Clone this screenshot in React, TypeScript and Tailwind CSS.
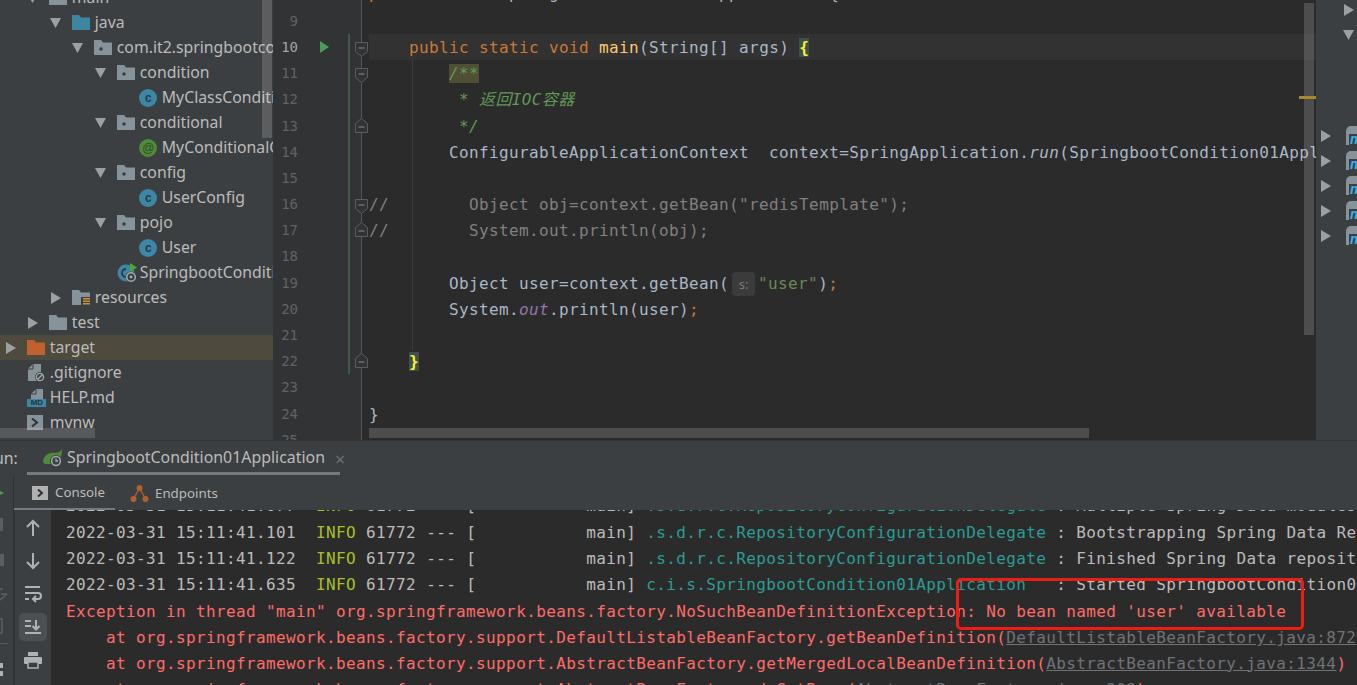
import React from 'react';

const MONO = "font-['DejaVu_Sans_Mono','Noto_Sans_CJK_SC',monospace]";

// tree indent levels, written out so tailwind picks them up
const INDENT: Record<number, string> = {
  0: 'pl-[5px]',
  1: 'pl-[27px]',
  2: 'pl-[50px]',
  3: 'pl-[72px]',
  4: 'pl-[95px]',
  5: 'pl-[117px]',
};

const Arrow = ({ open }: { open: boolean }) => (
  <svg width="12" height="12" viewBox="0 0 12 12" className="shrink-0">
    {open ? <path d="M0 1h11L5.5 11z" fill="#9da0a2" /> : <path d="M1 0l10 6-10 6z" fill="#9da0a2" />}
  </svg>
);

const Folder = ({ color, dot, stripes }: { color: string; dot?: boolean; stripes?: boolean }) => (
  <svg width="18" height="15" viewBox="0 0 18 15" className="shrink-0">
    <path d="M0 0h7l2 2.5h9V15H0z" fill={color} />
    {dot && <circle cx="7" cy="9" r="1.8" fill="#3c3f41" />}
    {stripes && (
      <g>
        <rect x="9" y="7" width="9" height="8" fill="#3c3f41" />
        <rect x="11" y="8" width="7" height="1.5" fill="#c9953b" />
        <rect x="11" y="10.5" width="7" height="1.5" fill="#c9953b" />
        <rect x="11" y="13" width="7" height="1.5" fill="#c9953b" />
      </g>
    )}
  </svg>
);

const ClassIcon = () => (
  <div className="w-[18px] h-[18px] rounded-full bg-[#3d87a6] flex items-center justify-center shrink-0 text-[12px] leading-none font-bold text-[#2b3a42] font-['Liberation_Sans',sans-serif]">
    c
  </div>
);

const AnnotationIcon = () => (
  <div className="w-[18px] h-[18px] rounded-full bg-[#4f8a3a] flex items-center justify-center shrink-0 text-[12px] leading-none text-[#2f4a2a] font-['Liberation_Sans',sans-serif]">
    @
  </div>
);

const BootIcon = () => (
  <div className="relative w-[20px] h-[20px] shrink-0">
    <svg width="20" height="20" viewBox="0 0 20 20">
      <circle cx="9" cy="10" r="8.5" fill="#3d87a6" />
      <path d="M9 6a4 4 0 1 0 0 8" fill="none" stroke="#2b3a42" strokeWidth="1.8" />
      <path d="M13 0l7 4.5-7 4.5z" fill="#4ea72e" />
      <circle cx="14" cy="14" r="5.5" fill="#3c3f41" />
      <circle cx="14" cy="14" r="4.3" fill="none" stroke="#a0aab0" strokeWidth="1.6" />
      <circle cx="14" cy="14" r="1.4" fill="#a0aab0" />
    </svg>
  </div>
);

const FileIcon = ({ kind }: { kind: string }) => {
  if (kind === 'git') {
    return (
      <svg width="18" height="18" viewBox="0 0 18 18" className="shrink-0">
        <path d="M1 5l5-5h8v17H1z" fill="#87939a" />
        <path d="M1 5h5V0" fill="none" stroke="#3c3f41" />
        <circle cx="13" cy="13" r="5" fill="#3c3f41" />
        <circle cx="13" cy="13" r="3.6" fill="none" stroke="#a0aab0" strokeWidth="1.4" />
        <path d="M10.5 15.5l5-5" stroke="#a0aab0" strokeWidth="1.4" />
      </svg>
    );
  }
  if (kind === 'md') {
    return (
      <div className="relative w-[19px] h-[18px] shrink-0">
        <svg width="19" height="10" viewBox="0 0 19 10">
          <path d="M4 5l5-5h7v10H4z" fill="#87939a" />
          <path d="M4 5h5V0" fill="none" stroke="#3c3f41" />
        </svg>
        <div className="absolute left-0 bottom-0 w-[19px] h-[8px] bg-[#3d87a6] text-[8px] leading-[8px] font-bold text-center text-[#22323a] font-['Liberation_Sans',sans-serif]">
          MD
        </div>
      </div>
    );
  }
  return (
    <div className="w-[16px] h-[15px] bg-[#87939a] flex items-center justify-center shrink-0">
      <svg width="8" height="9" viewBox="0 0 8 9">
        <path d="M1 0.5l5 4-5 4" fill="none" stroke="#2f3234" strokeWidth="2" />
      </svg>
    </div>
  );
};

type TreeRow = { level: number; arrow?: 'open' | 'closed'; icon: React.ReactNode; text: string; active?: boolean };

const treeRows: TreeRow[] = [
  { level: 1, arrow: 'open', icon: <Folder color="#87939a" />, text: 'main' },
  { level: 2, arrow: 'open', icon: <Folder color="#3e86a0" />, text: 'java' },
  { level: 3, arrow: 'open', icon: <Folder color="#87939a" dot />, text: 'com.it2.springbootcondition01' },
  { level: 4, arrow: 'open', icon: <Folder color="#87939a" dot />, text: 'condition' },
  { level: 5, icon: <ClassIcon />, text: 'MyClassCondition' },
  { level: 4, arrow: 'open', icon: <Folder color="#87939a" dot />, text: 'conditional' },
  { level: 5, icon: <AnnotationIcon />, text: 'MyConditionalOnClass' },
  { level: 4, arrow: 'open', icon: <Folder color="#87939a" dot />, text: 'config' },
  { level: 5, icon: <ClassIcon />, text: 'UserConfig' },
  { level: 4, arrow: 'open', icon: <Folder color="#87939a" dot />, text: 'pojo' },
  { level: 5, icon: <ClassIcon />, text: 'User' },
  { level: 4, icon: <BootIcon />, text: 'SpringbootCondition01Application' },
  { level: 2, arrow: 'closed', icon: <Folder color="#87939a" stripes />, text: 'resources' },
  { level: 1, arrow: 'closed', icon: <Folder color="#87939a" />, text: 'test' },
  { level: 0, arrow: 'closed', icon: <Folder color="#c0622d" />, text: 'target', active: true },
  { level: 0, icon: <FileIcon kind="git" />, text: '.gitignore' },
  { level: 0, icon: <FileIcon kind="md" />, text: 'HELP.md' },
  { level: 0, icon: <FileIcon kind="sh" />, text: 'mvnw' },
  { level: 0, icon: <FileIcon kind="sh" />, text: 'mvnw.cmd' },
];

const Sidebar = () => (
  <div className="relative w-[273px] shrink-0 bg-[#3c3f41] overflow-hidden text-[15.8px] text-[#bbbbbb] font-['Noto_Sans',sans-serif]">
    <div className="mt-[-15px]">
      {treeRows.map((row, i) => (
        <div
          key={i}
          className={`h-[25px] flex items-center whitespace-nowrap ${INDENT[row.level]} ${row.active ? 'bg-[#4f4a3e]' : ''}`}
        >
          <div className="w-[22.4px] shrink-0 flex items-center">
            {row.arrow && <Arrow open={row.arrow === 'open'} />}
          </div>
          <div className="w-[22.4px] shrink-0 flex items-center">{row.icon}</div>
          <span>{row.text}</span>
        </div>
      ))}
    </div>
    {/* scrollbars */}
    <div className="absolute left-[262px] top-0 w-[10px] h-[138px] bg-[rgba(255,255,255,0.16)]" />
    <div className="absolute left-0 top-[428px] w-[95px] h-[10px] bg-[rgba(255,255,255,0.14)]" />
  </div>
);

const C = {
  kw: 'text-[#cc7832]',
  fn: 'text-[#ffc66d]',
  doc: 'text-[#629755] italic',
  off: 'text-[#808080]',
  str: 'text-[#6a8759]',
  purple: 'text-[#9876aa] italic',
  match: 'text-[#ffef28] font-bold bg-[#3b514d]',
};

type Fold = 'down' | 'up' | undefined;
type CodeLine = { n: number; fold?: Fold; body: React.ReactNode; changed?: boolean; run?: boolean; current?: boolean };

const codeLines: CodeLine[] = [
  {
    n: 8,
    body: (
      <div className="mt-[-2px]">
        <span className={C.kw}>public class </span>SpringbootCondition01Application {'{'}
      </div>
    ),
  },
  { n: 9, body: '' },
  {
    n: 10,
    fold: 'down',
    changed: true,
    run: true,
    current: true,
    body: (
      <>
        {'    '}
        <span className={C.kw}>public static void </span>
        <span className={C.fn}>main</span>(String[] args) <span className={C.match}>{'{'}</span>
      </>
    ),
  },
  {
    n: 11,
    fold: 'down',
    changed: true,
    body: (
      <>
        {'        '}
        <span className={`${C.doc} bg-[#504f33]`}>/**</span>
      </>
    ),
  },
  { n: 12, changed: true, body: <span className={C.doc}>{'         * 返回IOC容器'}</span> },
  { n: 13, fold: 'up', changed: true, body: <span className={C.doc}>{'         */'}</span> },
  {
    n: 14,
    changed: true,
    body: (
      <>
        {'        ConfigurableApplicationContext  context=SpringApplication.'}
        <span className="italic">run</span>
        {'(SpringbootCondition01Application.class, args);'}
      </>
    ),
  },
  { n: 15, changed: true, body: '' },
  { n: 16, fold: 'down', changed: true, body: <span className={C.off}>{'//        Object obj=context.getBean("redisTemplate");'}</span> },
  { n: 17, fold: 'up', changed: true, body: <span className={C.off}>{'//        System.out.println(obj);'}</span> },
  { n: 18, changed: true, body: '' },
  {
    n: 19,
    changed: true,
    body: (
      <>
        {'        Object user=context.getBean('}
        <span className="inline-block w-[23px] h-[24px] mx-[3px] rounded-[4px] bg-[#3b3b3b] text-[#787878] text-[13px] leading-[24px] text-center align-middle tracking-normal font-['Noto_Sans',sans-serif]">
          s:
        </span>
        <span className={C.str}>"user"</span>)<span className={C.kw}>;</span>
      </>
    ),
  },
  {
    n: 20,
    changed: true,
    body: (
      <>
        {'        System.'}
        <span className={C.purple}>out</span>.println(user)<span className={C.kw}>;</span>
      </>
    ),
  },
  { n: 21, changed: true, body: '' },
  {
    n: 22,
    fold: 'up',
    changed: true,
    body: (
      <>
        {'    '}
        <span className={C.match}>{'}'}</span>
      </>
    ),
  },
  { n: 23, body: '' },
  { n: 24, body: '}' },
  { n: 25, body: '' },
];

const FoldMark = ({ dir }: { dir: 'down' | 'up' }) => (
  <svg
    width="13"
    height="15"
    viewBox="0 0 13 15"
    className={`absolute left-[82px] ${dir === 'down' ? 'top-[8px]' : 'top-[5px]'}`}
  >
    <path
      d={dir === 'down' ? 'M0.5 0.5h12v9l-6 5-6-5z' : 'M0.5 14.5h12v-9l-6-5-6 5z'}
      fill="#313335"
      stroke="#5a5d5f"
    />
    <path d={dir === 'down' ? 'M3.5 6h6' : 'M3.5 9h6'} stroke="#8a8d8f" />
  </svg>
);

const Editor = () => (
  <div className={`relative flex-1 min-w-0 bg-[#2b2b2b] overflow-hidden ${MONO} text-[16px] tracking-[0.37px] text-[#a9b7c6]`}>
    <div className="mt-[-18.4px]">
      {codeLines.map((line) => (
        <div key={line.n} className="flex h-[26.2px] leading-[26.2px] whitespace-pre">
          <div className="relative w-[89px] shrink-0 bg-[#313335] border-r border-[#555555]">
            <span
              className={`absolute right-[63px] text-[14px] tracking-normal ${line.current ? 'text-[#a4a3a3]' : 'text-[#606366]'}`}
            >
              {line.n}
            </span>
            {line.run && (
              <svg width="9" height="12" viewBox="0 0 9 12" className="absolute left-[47px] top-[7px]">
                <path d="M0 0l9 6-9 6z" fill="#499c54" />
              </svg>
            )}
            {line.changed && <div className="absolute left-[75px] top-0 bottom-0 w-[2px] bg-[#3f5a4a]" />}
            {line.fold && <FoldMark dir={line.fold} />}
          </div>
          <div className="w-[7px] shrink-0" />
          <div className={`flex-1 min-w-0 overflow-hidden pt-px ${line.current ? 'bg-[#323232]' : ''}`}>{line.body}</div>
        </div>
      ))}
    </div>
    {/* indent guide and scrollbars sit over the code */}
    <div className="absolute left-[139px] top-[60px] w-px h-[290px] bg-[#3c3c3c]" />
    <div className="absolute left-[1031px] top-[3px] w-[10px] h-[332px] bg-[rgba(255,255,255,0.16)]" />
    <div className="absolute left-[1026px] top-[96px] w-[17px] h-[3px] bg-[#a68a2b]" />
    <div className="absolute left-[96px] top-[428px] w-[720px] h-[10px] bg-[rgba(255,255,255,0.16)]" />
  </div>
);

const MavenIcon = () => (
  <div className="relative w-[16px] h-[19px] shrink-0 bg-[#87939a] rounded-tl-[5px]">
    <span className="absolute left-[3px] top-[8px] w-[13px] h-[11px] bg-[#3c3f41] pl-[1px] text-[14px] leading-[10px] font-bold italic text-[#35b3e6] font-['Liberation_Sans',sans-serif]">
      m
    </span>
  </div>
);

const RightPanel = () => (
  <div className="w-[41px] shrink-0 bg-[#3c3f41] overflow-hidden">
    <div className="pl-[27px] pt-[4px] flex flex-col gap-[13px]">
      <Arrow open={false} />
      <Arrow open />
    </div>
    <div className="mt-[82px] pl-[4px] flex flex-col">
      {[0, 1, 2, 3, 4].map((i) => (
        <div key={i} className="h-[25px] flex items-center gap-[14px]">
          <Arrow open={false} />
          <MavenIcon />
        </div>
      ))}
    </div>
  </div>
);

const SpringTabIcon = () => (
  <svg width="20" height="18" viewBox="0 0 20 18" className="shrink-0">
    <path d="M0 12C1 5 8 3 12 4c3 0 5-1 7-4 0 7-2 14-9 15H3C1 15 0 14 0 12z" fill="#4f8a3a" />
    <circle cx="13" cy="12" r="6" fill="#3c3f41" />
    <circle cx="13" cy="12" r="4.4" fill="none" stroke="#a0aab0" strokeWidth="1.5" />
    <path d="M13 9.5V12h2" fill="none" stroke="#a0aab0" strokeWidth="1.3" />
  </svg>
);

const EndpointsIcon = () => (
  <svg width="19" height="19" viewBox="0 0 19 19" className="shrink-0">
    <path d="M3.5 15L9.5 4l6 11" fill="none" stroke="#a85b2d" strokeWidth="1.5" />
    <circle cx="9.5" cy="4" r="3" fill="#b35f2e" />
    <circle cx="3.5" cy="15" r="3" fill="#b35f2e" />
    <circle cx="15.5" cy="15" r="3" fill="#b35f2e" />
  </svg>
);

const TabBar = () => (
  <div className="h-[35px] shrink-0 bg-[#3c3f41] border-t border-[#2f3133] flex font-['Noto_Sans',sans-serif] text-[15.9px] text-[#bbbbbb] overflow-hidden">
    <div className="w-[27px] shrink-0 flex items-center pt-px">
      <span className="ml-[-16px]">Run:</span>
    </div>
    <div className="w-[313px] shrink-0 flex items-center gap-[4px] pl-[16px] pt-[3px] border-b-[3px] border-[#747a80]">
      <SpringTabIcon />
      <span className="whitespace-nowrap">SpringbootCondition01Application</span>
    </div>
    <div className="flex items-center pt-px">
      <span className="ml-[-5px] text-[#6e7072] text-[18px] leading-none">×</span>
    </div>
  </div>
);

const ToolButton = ({ children, active }: { children: React.ReactNode; active?: boolean }) => (
  <div className={`w-[28px] h-[28px] shrink-0 flex items-center justify-center rounded-[5px] ${active ? 'bg-[#4c5052]' : ''}`}>{children}</div>
);

const stroke = { fill: 'none', stroke: '#afb1b3', strokeWidth: 2 };

const Toolbar = () => (
  <div className="w-[37px] shrink-0 bg-[#3c3f41] border-l border-[#323232] flex flex-col items-center pt-[4px] gap-[5px] overflow-hidden">
    <ToolButton>
      <svg width="16" height="18" viewBox="0 0 16 18">
        <path d="M8 17V2M2 8l6-6 6 6" {...stroke} />
      </svg>
    </ToolButton>
    <ToolButton>
      <svg width="16" height="18" viewBox="0 0 16 18">
        <path d="M8 1v15M2 10l6 6 6-6" {...stroke} />
      </svg>
    </ToolButton>
    <ToolButton>
      <svg width="18" height="18" viewBox="0 0 18 18">
        <path d="M1 2h15M1 8h13a3 3 0 0 1 0 6H9M12 11l-3 3 3 3M1 14h4" {...stroke} />
      </svg>
    </ToolButton>
    <ToolButton active>
      <svg width="18" height="16" viewBox="0 0 18 16">
        <path d="M1 2h6M1 7h6M1 14h16M12 1v9M8.5 7l3.5 3.5L15.500 7" {...stroke} />
      </svg>
    </ToolButton>
    <ToolButton>
      <svg width="18" height="17" viewBox="0 0 18 17">
        <rect x="4" y="0" width="10" height="4" fill="#afb1b3" />
        <rect x="0" y="5" width="18" height="7" rx="1" fill="#afb1b3" />
        <rect x="4" y="10" width="10" height="6" fill="#3c3f41" stroke="#afb1b3" strokeWidth="1.500" />
      </svg>
    </ToolButton>
    <ToolButton>
      <svg width="16" height="16" viewBox="0 0 16 16">
        <rect x="5" y="0" width="6" height="4" fill="#afb1b3" />
        <rect x="0" y="4" width="16" height="12" fill="#afb1b3" />
      </svg>
    </ToolButton>
  </div>
);

const LeftStrip = () => (
  <div className="relative w-[14px] shrink-0 bg-[#3c3f41] border-r border-[#323232] overflow-hidden">
    <svg width="4" height="10" viewBox="0 0 4 10" className="absolute left-0 top-[13px]">
      <path d="M-6 0l10 5-10 5z" fill="#499c54" />
    </svg>
    <div className="absolute left-0 top-[43px] w-[3px] h-[13px] bg-[#5b5e60]" />
    <div className="absolute left-0 top-[79px] w-[4px] h-[12px] bg-[#5b5e60]" />
    <svg width="8" height="14" viewBox="0 0 8 14" className="absolute left-0 top-[112px]">
      <path d="M0 2h3M7 7L0 13M7 7H1" fill="none" stroke="#55585a" strokeWidth="2" />
    </svg>
    <div className="absolute left-[-8px] top-[143px] w-[11px] h-[16px] border-2 border-[#55585a]" />
    <div className="absolute left-0 top-[168px] w-[8px] h-px bg-[#55585a]" />
    <div className="absolute left-0 top-[188px] w-[3px] h-[5px] bg-[#afb1b3]" />
    <div className="absolute left-0 top-[196px] w-[3px] h-[5px] bg-[#afb1b3]" />
  </div>
);

const Teal = ({ children }: { children: React.ReactNode }) => <span className="text-[#2a9d94]">{children}</span>;

const LogRow = ({ time, name, msg }: { time: string; name: string; msg: string }) => (
  <div>
    {time}
    {'  '}
    <span className="text-[#a8c023]">INFO</span>
    {' 61772 --- [           main] '}
    <Teal>{name}</Teal>
    {' : '}
    {msg}
  </div>
);

const Link = ({ children }: { children: React.ReactNode }) => <span className="text-[#6f7376] underline">{children}</span>;

const ConsoleOutput = () => (
  <div className={`relative flex-1 min-w-0 bg-[#2b2b2b] overflow-hidden pl-[15px] ${MONO} text-[16px] tracking-[0.37px] leading-[26.2px] text-[#bbbbbb] whitespace-pre`}>
    <div className="mt-[-16.6px]">
      <LogRow
        time="2022-03-31 15:11:41.077"
        name=".s.d.r.c.RepositoryConfigurationDelegate"
        msg="Multiple Spring Data modules found, entering strict repository configuration mode!"
      />
      <LogRow
        time="2022-03-31 15:11:41.101"
        name=".s.d.r.c.RepositoryConfigurationDelegate"
        msg="Bootstrapping Spring Data Redis repositories in DEFAULT mode."
      />
      <LogRow
        time="2022-03-31 15:11:41.122"
        name=".s.d.r.c.RepositoryConfigurationDelegate"
        msg="Finished Spring Data repository scanning in 5 ms."
      />
      <LogRow
        time="2022-03-31 15:11:41.635"
        name="c.i.s.SpringbootCondition01Application  "
        msg="Started SpringbootCondition01Application in 1.2 seconds"
      />
      <div className="text-[#ff6b68]">
        <div className="relative top-px">Exception in thread "main" org.springframework.beans.factory.NoSuchBeanDefinitionException: No bean named 'user' available</div>
        <div className="relative top-px">
          {'    at org.springframework.beans.factory.support.DefaultListableBeanFactory.getBeanDefinition('}
          <Link>DefaultListableBeanFactory.java:872</Link>)
        </div>
        <div>
          {'    at org.springframework.beans.factory.support.AbstractBeanFactory.getMergedLocalBeanDefinition('}
          <Link>AbstractBeanFactory.java:1344</Link>)
        </div>
        <div>
          {'    at org.springframework.beans.factory.support.AbstractBeanFactory.doGetBean('}
          <Link>AbstractBeanFactory.java:309</Link>)
        </div>
      </div>
    </div>
    {/* red box someone drew on the screenshot */}
    <div className="absolute left-[905px] top-[68px] w-[348px] h-[52px] border-[3px] border-[#ee1c12] rounded-[5px]" />
  </div>
);

const RunPanel = () => (
  <div className="flex-1 min-h-0 flex flex-col">
    <TabBar />
    <div className="flex-1 min-h-0 flex">
      <LeftStrip />
      <div className="flex-1 min-w-0 flex flex-col">
        <div className="h-[35px] shrink-0 bg-[#3c3f41] flex text-[13.3px] text-[#bbbbbb] font-['Noto_Sans',sans-serif]">
          <div className="w-[101px] shrink-0 flex items-center gap-[7px] pl-[18px] pt-[2px] border-b-2 border-[#747a80]">
            <div className="w-[16px] h-[14px] bg-[#afb1b3] flex items-center justify-center shrink-0">
              <svg width="7" height="8" viewBox="0 0 7 8">
                <path d="M1 0.5l4 3.5-4 3.5" fill="none" stroke="#2f3234" strokeWidth="2" />
              </svg>
            </div>
            <span>Console</span>
          </div>
          <div className="flex items-center gap-[6px] pl-[15px] pt-[2px]">
            <EndpointsIcon />
            <span>Endpoints</span>
          </div>
        </div>
        <div className="flex-1 min-h-0 flex">
          <Toolbar />
          <ConsoleOutput />
        </div>
      </div>
    </div>
  </div>
);

export default function App() {
  return (
    <div className="w-[1357px] h-[685px] overflow-hidden flex flex-col bg-[#3c3f41]">
      <div className="h-[440px] shrink-0 flex">
        <Sidebar />
        <Editor />
        <RightPanel />
      </div>
      <RunPanel />
    </div>
  );
}
